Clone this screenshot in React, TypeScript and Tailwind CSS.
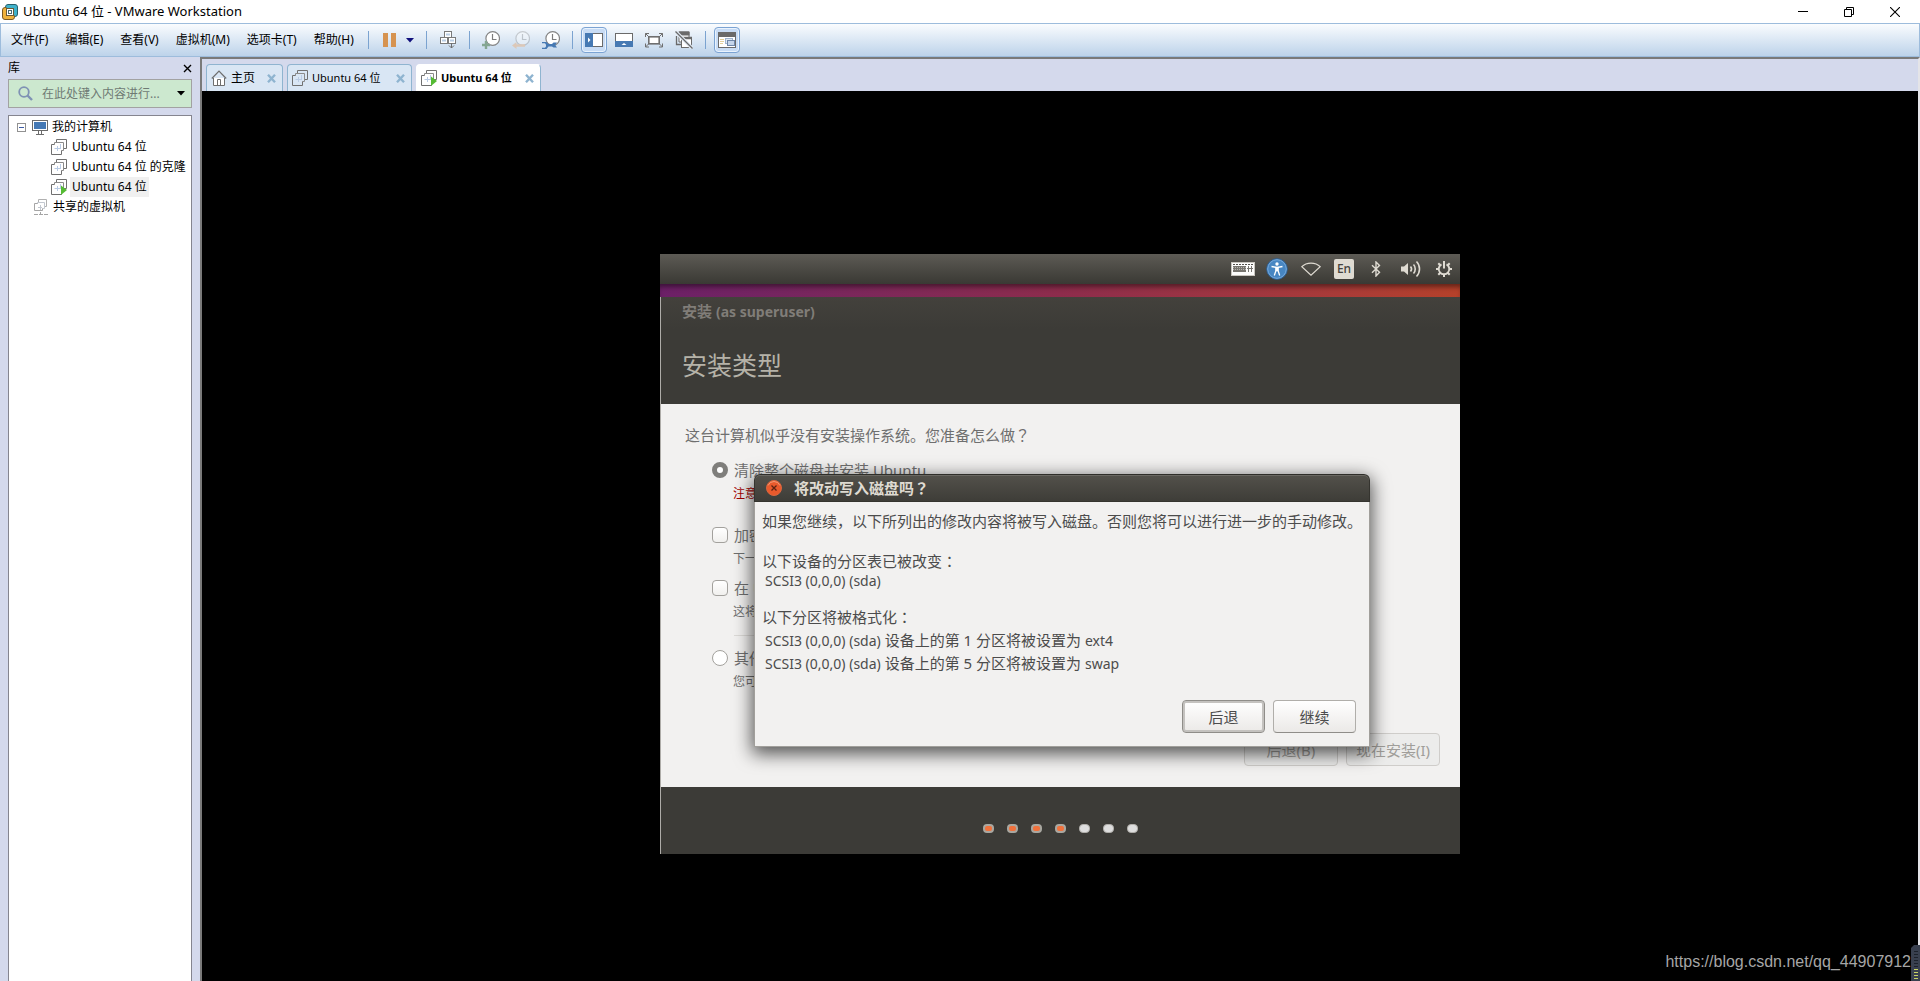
import type { ReactNode } from "react";

const UI = "font-['Noto_Sans','Noto_Sans_CJK_SC',sans-serif]";

/* ---------- Host window icons ---------- */

function AppLogo() {
  return (
    <svg width="16" height="16" viewBox="0 0 16 16" aria-hidden="true">
      <rect x="3.5" y="0.5" width="12" height="12" rx="2.5" fill="#3fb2cb" stroke="#27606d" />
      <rect x="0.5" y="3.5" width="12" height="12" rx="2.5" fill="#f0b23c" stroke="#7b5a24" />
      <path d="M4.5 3.5h8v8" fill="none" stroke="#3fb2cb" strokeWidth="3" />
      <rect x="4.5" y="4.5" width="7" height="7" fill="#fff" stroke="#6b5a35" />
      <rect x="6.5" y="6.5" width="3" height="3" fill="#fff" stroke="#4b6d75" />
    </svg>
  );
}

function VmIcon({ running = false }: { running?: boolean }) {
  return (
    <svg width="16" height="16" viewBox="0 0 16 16" className="shrink-0" aria-hidden="true">
      <path d="M3.500 9.500h6M6.500 7v5M9.500 5v5" stroke="#b9cbe4" fill="none" />
      <path d="M5.500 3.500v-3h10v9h-3" fill="none" stroke="#707070" />
      <path d="M3.500 5.500v-2h9v8h-2" fill="none" stroke="#8a8a8a" />
      <path d="M3.500 5.500h-3v10h10v-4" fill="none" stroke="#707070" />
      {running && <path d="M10 6.500l6 4.500l-6 5z" fill="#55bb33" />}
    </svg>
  );
}

function SharedIcon() {
  return (
    <svg width="14" height="16" viewBox="0 0 14 16" className="shrink-0" aria-hidden="true">
      <path d="M4.500 3v-2.500h8v7h-2" fill="none" stroke="#b0b0b0" />
      <path d="M3.500 5v-1.500h7v6h-2M4 8.500h4M6.500 6v5" fill="none" stroke="#c3c8d0" />
      <path d="M3.500 4.500h-3v7h8v-2" fill="none" stroke="#a5a5a5" />
      <path d="M0 15.500h4M5 15.500h4M10 15.500h4M6.500 13v3" fill="none" stroke="#a5a5a5" />
    </svg>
  );
}

function MonitorIcon() {
  return (
    <svg width="16" height="15" viewBox="0 0 16 15" className="shrink-0" aria-hidden="true">
      <rect x=".5" y=".5" width="15" height="10" fill="#fff" stroke="#6b6b6b" />
      <rect x="2" y="2" width="12" height="7" fill="#4478b4" />
      <path d="M6.500 11v3M9.500 11v3M4 14.500h8" stroke="#6b6b6b" />
    </svg>
  );
}

function HomeIcon() {
  return (
    <svg width="16" height="16" viewBox="0 0 16 16" className="shrink-0" aria-hidden="true">
      <path d="M2.500 8v7.500h11V8" fill="#fff" stroke="#6e6e6e" />
      <path d="M.8 8.500L8 1.200l7.200 7.300" fill="none" stroke="#6e6e6e" strokeWidth="1.200" />
      <path d="M6.500 15.500v-6h3v6" fill="none" stroke="#6e6e6e" />
    </svg>
  );
}

function CloseGlyph() {
  return (
    <svg width="9" height="9" viewBox="0 0 9 9" aria-hidden="true">
      <path d="M1 .8l7 7.400M8 .8L1 8.200" stroke="#8fb4d0" strokeWidth="2.400" />
    </svg>
  );
}

function ClockFace() {
  return (
    <>
      <circle cx="10.700" cy="7.500" r="6.800" fill="#fff" stroke="#858585" strokeWidth="1.200" />
      <path d="M10.500 3v5.500h4" fill="none" stroke="#7d7d7d" strokeWidth="1.200" />
    </>
  );
}

function ToolSvg({ children }: { children: ReactNode }) {
  return (
    <svg width="18" height="18" viewBox="0 0 18 18" className="shrink-0" aria-hidden="true">
      {children}
    </svg>
  );
}

function Tool({ label, children, disabled = false }: { label: string; children: ReactNode; disabled?: boolean }) {
  return (
    <button type="button" aria-label={label} disabled={disabled} className="flex items-center">
      {children}
    </button>
  );
}

function ToggledTool({ label, children }: { label: string; children: ReactNode }) {
  return (
    <button
      type="button"
      aria-label={label}
      aria-pressed="true"
      className="flex size-[26px] items-center justify-center rounded-sm border border-[#7ba3d3] bg-[#c8dcf5] shadow-[inset_0_0_0_1px_#eaf3fd]"
    >
      {children}
    </button>
  );
}

function Divider() {
  return <span className="h-[18px] w-px shrink-0 bg-[#7ba3d0]" />;
}

function Toolbar() {
  return (
    <div className="flex items-center">
      <Divider />
      <div className="flex items-center gap-2.5 pr-3 pl-3.5">
        <Tool label="挂起">
          <svg width="13" height="14" viewBox="0 0 13 14" aria-hidden="true">
            <path d="M0 0h5v14H0zM8 0h5v14H8z" fill="#d69350" />
          </svg>
        </Tool>
        <Tool label="电源">
          <svg width="8" height="5" viewBox="0 0 8 5" aria-hidden="true">
            <path d="M0 0h8L4 4.500z" fill="#10107c" />
          </svg>
        </Tool>
      </div>
      <Divider />
      <div className="flex items-center px-3">
        <Tool label="发送">
          <ToolSvg>
            <g fill="#fff" stroke="#7a7a7a">
              <rect x="5.500" y=".5" width="7" height="6" />
              <rect x="1.500" y="6.500" width="7" height="6" />
              <rect x="9.500" y="6.500" width="7" height="6" />
            </g>
            <path d="M3 9.500h4M11 9.500h4M7 3.500h4" stroke="#b9cde4" strokeWidth="2" />
            <path d="M12.500 12v5M10 14.500l2.500 2.500l2.500-2.500" fill="none" stroke="#6d6d6d" />
          </ToolSvg>
        </Tool>
      </div>
      <Divider />
      <div className="flex items-center gap-3 px-3">
        <Tool label="拍摄快照">
          <ToolSvg>
            <ClockFace />
            <path d="M4 10v8M0 14h8" stroke="#84a692" strokeWidth="2.400" />
          </ToolSvg>
        </Tool>
        <Tool label="恢复快照" disabled>
          <ToolSvg>
            <g opacity=".35">
              <ClockFace />
            </g>
            <path d="M0 14.500l4.500-3.500v2.200H13v2.600H4.500V18z" fill="#dcc8b8" />
          </ToolSvg>
        </Tool>
        <Tool label="管理快照">
          <ToolSvg>
            <ClockFace />
            <path
              d="M0 11h4.500l2 2H10l1.500-1.500H15l-1.500 2v1L15 16.500h-3.500L10 15.500H6.500l-2 2.500H0v-1.200h3l1-1.300v-1.700L3 12.200H0z"
              fill="#4679b3"
            />
          </ToolSvg>
        </Tool>
      </div>
      <Divider />
      <div className="flex items-center gap-2 px-2">
        <ToggledTool label="显示库">
          <svg width="18" height="14" viewBox="0 0 18 14" aria-hidden="true">
            <rect x=".5" y=".5" width="17" height="13" fill="#fff" stroke="#6a6a6a" />
            <rect width="8" height="14" fill="#4679b3" />
            <path d="M3 4.500L5.500 7L3 9.500z" fill="#fff" />
          </svg>
        </ToggledTool>
        <div className="flex items-center gap-3 pr-1">
          <Tool label="显示缩略图">
            <svg width="18" height="14" viewBox="0 0 18 14" aria-hidden="true">
              <rect x=".5" y=".5" width="17" height="13" fill="#fff" stroke="#6a6a6a" />
              <rect y="8" width="18" height="6" fill="#4679b3" />
              <path d="M6.500 12l2.500-2L11.500 12z" fill="#fff" />
            </svg>
          </Tool>
          <Tool label="全屏">
            <ToolSvg>
              <rect x="3.800" y="5.800" width="10.400" height="7" fill="#fff" stroke="#6f6f6f" strokeWidth="1.600" />
              <path
                d="M.5 6V2.500H4M.5 2.500l3 3M17.500 6V2.500H14M17.500 2.500l-3 3M.5 12.500V16H4M.5 16l3-3M17.500 12.500V16H14M17.500 16l-3-3"
                fill="none"
                stroke="#6f6f6f"
              />
            </ToolSvg>
          </Tool>
          <Tool label="Unity">
            <ToolSvg>
              <path d="M4 1h10v10H4z" fill="#fff" stroke="#6a6a6a" />
              <path d="M3.500 2.500h11" stroke="#6a6a6a" strokeWidth="4" />
              <rect x="6.500" y="6.500" width="10" height="10" fill="#fff" stroke="#6a6a6a" />
              <path d="M6 7h11" stroke="#6a6a6a" strokeWidth="2.500" />
              <path d="M1.500 5v8.500H6" fill="none" stroke="#6a6a6a" strokeWidth="1.300" />
              <path d="M.5.5l17 17" stroke="#e3ecf6" strokeWidth="3.600" />
              <path d="M.5.5l17 17" stroke="#6a6a6a" strokeWidth="1.300" />
            </ToolSvg>
          </Tool>
        </div>
      </div>
      <Divider />
      <div className="px-2">
        <ToggledTool label="控制台视图">
          <svg width="18" height="16" viewBox="0 0 18 16" aria-hidden="true">
            <rect x=".5" y=".5" width="17" height="15" fill="#fff" stroke="#6a6a6a" />
            <rect width="18" height="5" fill="#6a6a6a" />
            <path d="M2 7.500h4M2 9.500h4M2 11.500h3" stroke="#e2cf9d" />
            <rect x="7.500" y="6.500" width="7" height="5" fill="#dfe9f6" stroke="#9fb4cf" />
            <rect x="9.500" y="8.500" width="7" height="5" fill="#c5d5ea" stroke="#6e86a8" />
          </svg>
        </ToggledTool>
      </div>
    </div>
  );
}

function TitleBar() {
  return (
    <header className="flex h-[23px] items-center bg-white pr-0.5 pl-0.5">
      <AppLogo />
      <h1 className="ml-[5px] flex-1 pb-0.5 text-[13px] leading-[18px]">Ubuntu 64 位 - VMware Workstation</h1>
      <button type="button" aria-label="最小化" className="flex h-5 w-[46px] items-center justify-center">
        <svg width="10" height="10" viewBox="0 0 10 10" aria-hidden="true">
          <path d="M0 4.500h10" stroke="#000" />
        </svg>
      </button>
      <button type="button" aria-label="还原" className="flex h-5 w-[46px] items-center justify-center">
        <svg width="10" height="10" viewBox="0 0 10 10" aria-hidden="true">
          <path d="M.5 2.500h7v7h-7zM2.500 2.500v-2h7v7h-2" fill="none" stroke="#000" />
        </svg>
      </button>
      <button type="button" aria-label="关闭" className="flex h-5 w-[46px] items-center justify-center">
        <svg width="10" height="10" viewBox="0 0 10 10" aria-hidden="true">
          <path d="M0 0l10 10M10 0L0 10" stroke="#000" strokeWidth="1.100" />
        </svg>
      </button>
    </header>
  );
}

const MENUS = ["文件(F)", "编辑(E)", "查看(V)", "虚拟机(M)", "选项卡(T)", "帮助(H)"];

function MenuBar() {
  return (
    <nav className="flex h-[34px] items-center border border-[#9dbcdc] bg-linear-to-b from-[#fafcfe] to-[#bdd3ea] pl-2.5">
      <div className="flex items-center gap-[17px] pr-3.5">
        {MENUS.map((m) => (
          <button key={m} type="button" className="text-[12px] leading-4 whitespace-nowrap">
            {m}
          </button>
        ))}
      </div>
      <Toolbar />
    </nav>
  );
}

function TreeRow({ icon, label, selected = false }: { icon: ReactNode; label: string; selected?: boolean }) {
  return (
    <li className="flex h-5 items-center gap-[3px] pl-[42px]">
      {icon}
      <span className={selected ? "bg-[#f0f0f0] px-0.5 leading-5 whitespace-nowrap" : "px-0.5 leading-5 whitespace-nowrap"}>
        {label}
      </span>
    </li>
  );
}

function Library() {
  return (
    <aside className="flex w-[200px] shrink-0 flex-col px-2">
      <div className="flex h-[22px] items-center justify-between">
        <h2 className="text-[12px] leading-4">库</h2>
        <button type="button" aria-label="关闭库" className="flex size-[9px] items-center">
          <svg width="9" height="9" viewBox="0 0 9 9" aria-hidden="true">
            <path d="M1 1l7 7M8 1L1 8" stroke="#000" strokeWidth="1.400" />
          </svg>
        </button>
      </div>
      <div className="flex h-[29px] items-center border border-[#a2a2a2] bg-[#cce8cf] pr-1.5 pl-[9px]">
        <svg width="16" height="16" viewBox="0 0 16 16" className="shrink-0" aria-hidden="true">
          <circle cx="6" cy="6" r="4.800" fill="none" stroke="#7f92b4" strokeWidth="1.800" />
          <path d="M9.500 9.500l4.500 4.500" stroke="#7f92b4" strokeWidth="2.400" />
        </svg>
        <input
          aria-label="搜索库"
          placeholder="在此处键入内容进行..."
          className="ml-2 min-w-0 flex-1 bg-transparent text-[12px] leading-4 outline-none placeholder:text-[#6f7a74]"
        />
        <button type="button" aria-label="搜索选项" className="flex items-center">
          <svg width="8" height="5" viewBox="0 0 8 5" aria-hidden="true">
            <path d="M0 0h8L4 4.500z" fill="#000" />
          </svg>
        </button>
      </div>
      <ul className="mt-[7px] flex-1 border border-b-0 border-[#85858f] bg-white pt-px text-[12px]">
        <li className="flex h-5 items-center pl-2">
          <button type="button" aria-label="折叠" className="mr-1.5 flex items-center">
            <svg width="9" height="9" viewBox="0 0 9 9" aria-hidden="true">
              <rect x=".5" y=".5" width="8" height="8" fill="#fff" stroke="#919191" />
              <path d="M2 4.500h5" stroke="#3c5ba5" />
            </svg>
          </button>
          <MonitorIcon />
          <span className="ml-1 leading-5">我的计算机</span>
        </li>
        <TreeRow icon={<VmIcon />} label="Ubuntu 64 位" />
        <TreeRow icon={<VmIcon />} label="Ubuntu 64 位 的克隆" />
        <TreeRow icon={<VmIcon running />} label="Ubuntu 64 位" selected />
        <li className="flex h-5 items-center gap-[5px] pl-[25px]">
          <SharedIcon />
          <span className="leading-5">共享的虚拟机</span>
        </li>
      </ul>
    </aside>
  );
}

function Tab({ icon, label, active = false, wide = true }: { icon: ReactNode; label: string; active?: boolean; wide?: boolean }) {
  return (
    <div
      className={[
        "flex h-[27px] items-center rounded-t border border-b-0 pr-1.5 pl-1",
        wide ? "w-[125px]" : "w-[77px]",
        active ? "border-white border-r-[#8fb4d0] bg-white font-bold" : "border-[#8fb4d0] bg-[#d9e6f4]",
      ].join(" ")}
    >
      {icon}
      <button
        type="button"
        role="tab"
        aria-selected={active}
        className={
          wide
            ? "ml-1 flex-1 text-left text-[11px] leading-4 whitespace-nowrap"
            : "ml-1 flex-1 text-left text-[12px] leading-4 whitespace-nowrap"
        }
      >
        {label}
      </button>
      <button type="button" aria-label="关闭选项卡" className="flex items-center">
        <CloseGlyph />
      </button>
    </div>
  );
}

/* ---------- Guest desktop ---------- */

/* Full-width punctuation centred in its em box */
function Mark({ children }: { children: string }) {
  return <span className="font-['Noto_Sans_CJK_JP',sans-serif]">{children}</span>;
}

function GuestPanel() {
  return (
    <div className="flex h-[30px] items-center justify-end bg-linear-to-b from-[#5d5b55] to-[#3a3934] pr-2">
      <div className="flex w-[35px]">
        <svg width="24" height="14" viewBox="0 0 24 14" aria-hidden="true">
          <rect x=".5" y=".5" width="23" height="13" fill="#fdfdfc" stroke="#c9c6bf" />
          <path d="M2 2.500h20" stroke="#55534e" strokeDasharray="2 1" />
          <rect x="2" y="4" width="13" height="6" fill="#77756f" />
          <path d="M2 5.500h13M2 7.500h13" stroke="#b5b3ae" strokeDasharray="1 1" />
          <path d="M17.500 4v6M20.500 4v6M16 6.500h6" stroke="#77756f" />
        </svg>
      </div>
      <div className="flex w-[35px]">
        <svg width="22" height="22" viewBox="0 0 22 22" aria-hidden="true">
          <circle cx="11" cy="11" r="10.300" fill="#4786c2" stroke="#2d5f92" />
          <circle cx="11" cy="11" r="9.300" fill="none" stroke="#79abdd" />
          <circle cx="11" cy="6" r="1.700" fill="#fff" />
          <path d="M5.500 8.500l4.500.8v3.200L8.300 17.500M16.500 8.500l-4.500.8v3.200l1.700 5" fill="none" stroke="#fff" strokeWidth="1.300" />
          <rect x="9.500" y="8.800" width="3" height="4.500" fill="#fff" />
        </svg>
      </div>
      <div className="flex w-[33px] items-center">
        <svg width="20" height="14" viewBox="0 0 20 14" aria-hidden="true">
          <path d="M.8 4.700C5.500-.2 14.500-.2 19.200 4.700L10 13.200z" fill="none" stroke="#dfdbd2" strokeWidth="1.200" />
        </svg>
      </div>
      <div className="flex w-[37px]">
        <span className="flex size-5 items-center justify-center rounded-xs bg-[#dfdbd2] text-[12px] leading-4 font-medium text-[#44423d]">
          En
        </span>
      </div>
      <div className="flex w-[30px]">
        <svg width="10" height="16" viewBox="0 0 10 16" aria-hidden="true">
          <path d="M1 4.300l7.500 7L5 15V1l3.500 3.500L1 11.700" fill="none" stroke="#dfdbd2" strokeWidth="1.400" />
        </svg>
      </div>
      <div className="flex w-[35px]">
        <svg width="20" height="18" viewBox="0 0 20 18" aria-hidden="true">
          <path d="M0 6.500h3l4-3.500v12L3 11.500H0z" fill="#dfdbd2" />
          <path d="M9.500 6.500c1.200 1.400 1.200 3.600 0 5M12.500 4.500c2.300 2.300 2.300 6.700 0 9M15.500 1.500c4 4 4 11 0 15" fill="none" stroke="#dfdbd2" strokeWidth="1.600" />
        </svg>
      </div>
      <svg width="16" height="16" viewBox="0 0 16 16" aria-hidden="true">
        <path d="M5.500 3.300a5.300 5.300 0 1 0 5 0" fill="none" stroke="#dfdbd2" strokeWidth="1.900" />
        <path d="M8 0v7.500" stroke="#dfdbd2" strokeWidth="2" />
        <path
          d="M0 8h3M13 8h3M8 13v3M2.300 2.300l2 2M13.700 2.300l-2 2M2.300 13.700l2-2M13.700 13.700l-2-2"
          stroke="#dfdbd2"
          strokeWidth="2"
        />
      </svg>
    </div>
  );
}

const RADIO =
  "size-4 shrink-0 appearance-none rounded-full border border-[#a3a19d] bg-white checked:border-[5px] checked:border-[#7f7e7b] checked:bg-white";
const CHECK = "size-4 shrink-0 appearance-none rounded border border-[#a3a19d] bg-linear-to-b from-white to-[#f1f0ee]";

function Option({
  id,
  type,
  label,
  note,
  warning = false,
  checked = false,
}: {
  id: string;
  type: "radio" | "checkbox";
  label: string;
  note: string;
  warning?: boolean;
  checked?: boolean;
}) {
  return (
    <div>
      <div className="flex h-6 items-center gap-1.5">
        <input
          id={id}
          type={type}
          name={type === "radio" ? "install-kind" : id}
          defaultChecked={checked}
          className={type === "radio" ? RADIO : CHECK}
        />
        <label htmlFor={id} className="text-[15px] leading-6">
          {label}
        </label>
      </div>
      <p className={warning ? "pl-[21px] text-[12px] leading-6 text-[#a40000]" : "pl-[21px] text-[12px] leading-6"}>{note}</p>
    </div>
  );
}

function ConfirmDialog() {
  return (
    <div
      role="dialog"
      aria-labelledby="confirm-title"
      className="absolute top-[220px] left-[94px] flex h-[273px] w-[616px] flex-col rounded-t-md bg-[#f2f1f0] text-[15px] text-[#4c4c4c] shadow-[0_5px_18px_2px_rgba(0,0,0,0.65)]"
    >
      <div className="flex h-7 items-center gap-3 rounded-t-md border border-[#35342f] border-t-[#2f2e2a] bg-linear-to-b from-[#53514b] to-[#3e3d38] pl-[11px] shadow-[inset_0_1px_0_#6a6862]">
        <button type="button" aria-label="关闭对话框" className="flex items-center">
          <svg width="16" height="16" viewBox="0 0 16 16" aria-hidden="true">
            <circle cx="8" cy="8" r="7.500" fill="#ea5a2c" stroke="#d9663f" />
            <path d="M2 5.500a6.500 6.500 0 0 1 12 0" fill="none" stroke="#f59a75" />
            <path d="M5.500 5.500l5 5M10.500 5.500l-5 5" stroke="#5b2312" strokeWidth="1.300" />
          </svg>
        </button>
        <h3 id="confirm-title" className="text-[15px] leading-6 font-bold text-[#dfdbd2]">
          将改动写入磁盘吗<Mark>？</Mark>
        </h3>
      </div>
      <div className="flex flex-1 flex-col border border-t-0 border-[#a19f9b] px-[7px] pt-[7px]">
        <p className="leading-6 whitespace-nowrap">如果您继续，以下所列出的修改内容将被写入磁盘。否则您将可以进行进一步的手动修改。</p>
        <p className="mt-4 leading-6">
          以下设备的分区表已被改变<Mark>：</Mark>
        </p>
        <p className="pl-[3px] text-[14px] leading-4">SCSI3 (0,0,0) (sda)</p>
        <p className="mt-4 leading-6">
          以下分区将被格式化<Mark>：</Mark>
        </p>
        <ul className="pl-[3px] leading-[23px]">
          <li>
            <span className="text-[14px]">SCSI3 (0,0,0) (sda)</span> 设备上的第 1 分区将被设置为 <span className="text-[14px]">ext4</span>
          </li>
          <li>
            <span className="text-[14px]">SCSI3 (0,0,0) (sda)</span> 设备上的第 5 分区将被设置为 <span className="text-[14px]">swap</span>
          </li>
        </ul>
        <div className="mt-auto mb-[13px] flex justify-end gap-2 pr-1.5">
          <button
            type="button"
            className="h-[33px] w-[83px] rounded border border-[#8f8d89] bg-linear-to-b from-white to-[#ebe9e7] leading-6 shadow-[inset_0_0_0_2px_#c4c2bf]"
          >
            后退
          </button>
          <button
            type="button"
            className="h-[33px] w-[83px] rounded border border-[#b0aeaa] border-b-[#8f8d89] bg-linear-to-b from-white to-[#ebe9e7] leading-6"
          >
            继续
          </button>
        </div>
      </div>
    </div>
  );
}

function GuestScreen() {
  return (
    <section className="relative flex h-[600px] w-[800px] flex-col bg-[#3c3b37]">
      <GuestPanel />
      <div className="h-[13px] bg-linear-to-r from-[#6c2067] via-[#8d2c4c] to-[#b5412a] shadow-[inset_0_5px_5px_-2px_rgba(0,0,0,0.45)]" />
      <div className="flex flex-1 flex-col border-l border-[#aeaca8]">
        <div className="h-[107px] bg-linear-to-b from-[#43413c] to-[#3c3b37] to-30% px-[21px] pt-0.5">
          <p className="text-[15px] leading-6 font-bold text-[#807d78]">
            安装 <span className="text-[14px]">(as superuser)</span>
          </p>
          <h2 className="mt-3 text-[25px] leading-[58px] text-[#b5b2a8]">安装类型</h2>
        </div>
        <form className="flex flex-1 flex-col bg-[#f2f1f0] pt-[19px] pr-5 pl-6 text-[#6f6f6f]" onSubmit={(e) => e.preventDefault()}>
          <p className="text-[15px] leading-6">
            这台计算机似乎没有安装操作系统。您准备怎么做<Mark>？</Mark>
          </p>
          <div className="flex flex-col pt-[11px] pl-[27px]">
            <Option id="erase" type="radio" label="清除整个磁盘并安装 Ubuntu" note="注意" warning checked />
            <div className="pt-[17px]">
              <Option id="encrypt" type="checkbox" label="加密" note="下一" />
            </div>
            <div className="pt-[5px]">
              <Option id="lvm" type="checkbox" label="在 U" note="这将" />
            </div>
            <hr className="mt-[11px] mb-[10px] ml-[22px] w-[300px] border-[#dcdad7]" />
            <Option id="other" type="radio" label="其他" note="您可" />
          </div>
          <div className="mt-auto mb-[21px] flex justify-end gap-2 text-[15px] text-[#a09e9a]">
            <button type="button" disabled className="h-[33px] w-[94px] rounded border border-[#cfcdca] bg-[#ececeb] leading-6">
              后退(B)
            </button>
            <button type="button" disabled className="h-[33px] w-[94px] rounded border border-[#cfcdca] bg-[#ececeb] leading-6">
              现在安装(I)
            </button>
          </div>
        </form>
        <div className="flex h-[67px] items-center justify-center gap-[13px] pt-4">
          {[0, 1, 2, 3, 4, 5, 6].map((step) => (
            <span
              key={step}
              className={
                step < 4
                  ? "h-[9px] w-[11px] rounded-sm border-2 border-[#a9a7a0] bg-[#f0713c]"
                  : "h-[9px] w-[11px] rounded-sm border border-[#b0aeaa] bg-[#dedede]"
              }
            />
          ))}
        </div>
      </div>
      <ConfirmDialog />
    </section>
  );
}

export default function App() {
  return (
    <div className={`relative flex min-h-screen flex-col overflow-hidden bg-[#d4d9ec] text-black ${UI}`}>
      <TitleBar />
      <MenuBar />
      <div className="flex flex-1">
        <Library />
        <main className="flex min-w-0 flex-1 flex-col border-t-2 border-r-2 border-l-2 border-t-[#7a7a7a] border-r-[#e4e4e8] border-l-[#7a7a7a]">
          <div role="tablist" className="flex gap-1 pt-[5px] pl-1">
            <Tab icon={<HomeIcon />} label="主页" wide={false} />
            <Tab icon={<VmIcon />} label="Ubuntu 64 位" />
            <Tab icon={<VmIcon running />} label="Ubuntu 64 位" active />
          </div>
          <div className="flex flex-1 items-start justify-center bg-black pt-[163px]">
            <GuestScreen />
          </div>
        </main>
      </div>
      <a
        href="https://blog.csdn.net/qq_44907912"
        className="absolute right-[9px] bottom-[7px] font-['Liberation_Sans',sans-serif] text-[16px] leading-6 text-[#a6a6a6]"
      >
        https://blog.csdn.net/qq_44907912
      </a>
      <svg width="9" height="36" viewBox="0 0 9 36" className="absolute right-0 bottom-0" aria-hidden="true">
        <path d="M0 36V3l3-3h6v36z" fill="#39404f" />
        <path d="M3 6.500h4M3 9.500h4M3 12.500h4M3 15.500h4M3 18.500h4M3 21.500h4" stroke="#1c212b" />
        <path d="M3 24.500h4M3 27.500h4M3 30.500h4M3 33.500h4" stroke="#c9d264" />
      </svg>
    </div>
  );
}
